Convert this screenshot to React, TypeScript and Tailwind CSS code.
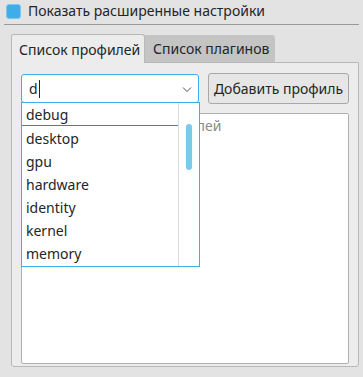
import React from 'react';

const items = ['debug', 'desktop', 'gpu', 'hardware', 'identity', 'kernel', 'memory'];

export default function App() {
  return (
    <div
      className="relative w-[363px] h-[377px] bg-[#e3e3e3] text-[14px] text-[#232627] overflow-hidden"
      style={{ fontFamily: '"Noto Sans", "DejaVu Sans", sans-serif' }}
    >
      {/* checkbox header */}
      <div className="mx-[4px] h-[25px] border-b border-[#9a9a9a] flex items-center pl-[2px] pb-[2px]">
        <div className="w-[15px] h-[15px] rounded-[3px] border border-[#7fc6ef] bg-[#3daee9]" />
        <span className="ml-[7px] leading-none">Показать расширенные настройки</span>
      </div>

      {/* tabs */}
      <div className="mt-[9px] ml-[11px] flex h-[28px]">
        <div className="w-[134px] bg-[#ececec] border border-b-0 border-[#b8b8b8] rounded-t-[3px] flex items-center pl-[7px] relative z-10 h-[29px]">
          Список профилей
        </div>
        <div className="w-[130px] bg-[#c4c4c4] rounded-tr-[3px] flex items-center pl-[8px] mt-px">
          Список плагинов
        </div>
      </div>

      {/* tab panel */}
      <div className="ml-[11px] w-[348px] h-[305px] bg-[#ececec] border border-[#b8b8b8] rounded-b-[3px] pt-[10px] pl-[9px]">
        <div className="flex items-center">
          <div className="w-[178px] h-[29px] bg-white border border-[#3daee9] rounded-[3px] flex items-center pl-[7px] pr-[5px]">
            <span>d</span>
            <span className="ml-px w-px h-[18px] bg-[#232627]" />
            <svg className="ml-auto" width="12" height="12" viewBox="0 0 12 12">
              <path d="M2 4.5 L6 8.5 L10 4.5" fill="none" stroke="#4d4d4d" strokeWidth="1" />
            </svg>
          </div>
          <div className="ml-[9px] w-[141px] h-[31px] bg-[#e6e6e6] border border-[#a8a8a8] rounded-[3px] flex items-center justify-center">
            Добавить профиль
          </div>
        </div>
        <div className="mt-[9px] w-[328px] h-[251px] bg-white border border-[#b0b0b0] rounded-[2px] pl-[7px] pt-[1px] text-[#8a8a8a]">
          Нет добавленных профилей
        </div>
      </div>

      {/* combobox popup */}
      <div className="absolute left-[21px] top-[102px] w-[179px] h-[165px] bg-white border border-[#3daee9] flex">
        <div className="flex-1 flex flex-col">
          {items.map((it, i) => (
            <div
              key={it}
              className={`h-[23px] flex items-center pl-[4px] pt-px ${i === 0 ? 'border-b border-[#4a7fa5]' : ''}`}
            >
              {it}
            </div>
          ))}
        </div>
        <div className="w-[21px] border-l border-[#dcdcdc] pt-[21px] flex justify-center">
          <div className="w-[6px] h-[46px] rounded-full bg-[#7cc8ef]" />
        </div>
      </div>
    </div>
  );
}
